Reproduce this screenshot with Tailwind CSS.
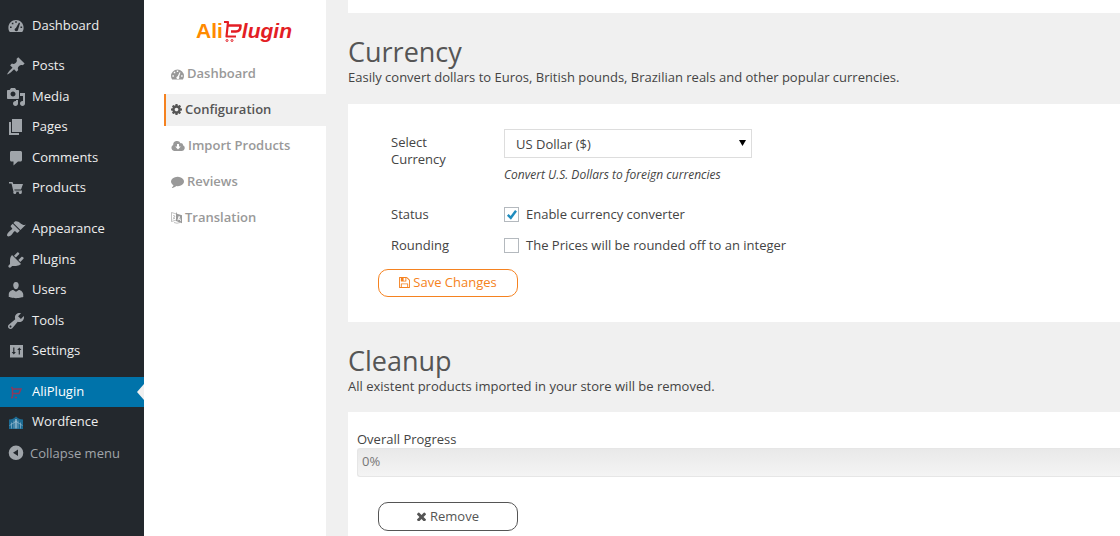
<!DOCTYPE html>
<html lang="en">
  <head>
    <meta charset="UTF-8" />
    <meta name="viewport" content="width=device-width, initial-scale=1.0" />
    <title>AliPlugin Configuration</title>
    <script src="https://cdn.jsdelivr.net/npm/@tailwindcss/browser@4"></script>
  </head>

  <body
    class="flex h-screen overflow-hidden bg-[#f0f0f0] font-['Open_Sans',sans-serif] text-[13px] leading-[18px] text-[#444]"
  >
    <!-- WordPress admin menu -->
    <nav class="w-36 shrink-0 bg-[#23282d] pt-[10px] text-[#eee] [&_a>svg]:mt-0.5">
      <a href="#" class="flex h-[30px] items-center gap-[6px] pl-[6px]">
        <svg class="size-5 text-[#a0a5aa]" viewBox="0 0 20 20" fill="currentColor">
          <path fill-rule="evenodd" d="M3.800 16h12.400c1.100-1.300 1.400-2.700 1.400-4.300 0-4.400-3.400-7.700-7.600-7.700s-7.600 3.300-7.600 7.700c0 1.600.3 3 1.400 4.300zM9.200 5.200h1.600v1.600H9.200zM5.800 6.700h1.600v1.600H5.800zM4 10.500h1.600v1.600H4zM14.500 10.500h1.600v1.600h-1.600zM13 6.500l1 .7-1.800 6.100c0 1.300-.8 2-1.900 2s-2-1-1.600-2.200c.2-.6.600-1 1.200-1.200z" />
        </svg>
        <span>Dashboard</span>
      </a>

      <ul class="mt-[10px] flex h-[152px] flex-col justify-between">
        <li>
          <a href="#" class="flex h-[30px] items-center gap-[6px] pl-[6px]">
            <svg class="size-5 text-[#a0a5aa]" viewBox="0 0 20 20" fill="currentColor">
              <path d="M10.440 3.020l1.820-1.820 6.360 6.350-1.830 1.820c-1.050-.68-2.480-.57-3.410.36l-.75.75c-.92.93-1.040 2.350-.35 3.410l-1.830 1.820-2.410-2.410-2.800 2.790c-.42.42-3.380 2.710-3.800 2.290s1.860-3.390 2.280-3.810l2.790-2.790L4.100 9.360l1.830-1.820c1.050.69 2.480.57 3.400-.36l.75-.75c.93-.92 1.050-2.350.36-3.410z" />
            </svg>
            <span>Posts</span>
          </a>
        </li>
        <li>
          <a href="#" class="flex h-[30px] items-center gap-[6px] pl-[6px]">
            <svg class="size-5 text-[#a0a5aa]" viewBox="0 0 20 20" fill="currentColor">
              <path d="M13 11V4c0-.55-.45-1-1-1h-1.670L9 1H5L3.670 3H2c-.55 0-1 .45-1 1v7c0 .55.45 1 1 1h10c.55 0 1-.45 1-1zM7 4.500c1.380 0 2.500 1.120 2.500 2.500S8.380 9.500 7 9.500 4.500 8.380 4.500 7 5.620 4.500 7 4.500zM14 6h5v10.500c0 1.380-1.120 2.500-2.500 2.500S14 17.880 14 16.500s1.120-2.500 2.500-2.500c.17 0 .34.020.5.050V9h-3V6zm-4 8.050V13h2v3.500c0 1.380-1.120 2.500-2.500 2.500S7 17.880 7 16.500 8.120 14 9.500 14c.17 0 .34.020.5.050z" />
            </svg>
            <span>Media</span>
          </a>
        </li>
        <li>
          <a href="#" class="flex h-[30px] items-center gap-[6px] pl-[6px]">
            <svg class="size-5 text-[#a0a5aa]" viewBox="0 0 20 20" fill="currentColor">
              <path d="M6 15V2h10v13H6zm-1 1h8v2H3V5h2v11z" />
            </svg>
            <span>Pages</span>
          </a>
        </li>
        <li>
          <a href="#" class="flex h-[30px] items-center gap-[6px] pl-[6px]">
            <svg class="size-5 text-[#a0a5aa]" viewBox="0 0 20 20" fill="currentColor">
              <path d="M5.500 3h9c.8 0 1.500.7 1.500 1.500V12c0 .8-.7 1.500-1.500 1.500H12L7.500 17.500v-4h-2C4.700 13.500 4 12.800 4 12V4.500C4 3.700 4.700 3 5.500 3z" />
            </svg>
            <span>Comments</span>
          </a>
        </li>
        <li>
          <a href="#" class="flex h-[30px] items-center gap-[6px] pl-[6px]">
            <svg class="size-5 text-[#a0a5aa]" viewBox="0 0 20 20" fill="currentColor">
              <path d="M3 4h3.500l.8 2H17l-2 5.500H8.300l.3 1H16v1.200H7.500L5.500 5.500H3z" />
              <circle cx="8.800" cy="14.500" r="1.500" />
              <circle cx="14.300" cy="14.500" r="1.500" />
            </svg>
            <span>Products</span>
          </a>
        </li>
      </ul>

      <ul class="mt-[11px] flex h-[152px] flex-col justify-between">
        <li>
          <a href="#" class="flex h-[30px] items-center gap-[6px] pl-[6px]">
            <svg class="size-5 text-[#a0a5aa]" viewBox="0 0 20 20" fill="currentColor">
              <path d="M14.480 11.060L7.410 3.990l1.500-1.500c.5-.56 2.300-.47 3.510.32 1.210.8 1.430 1.280 2.910 2.100 1.180.64 2.450 1.260 4.450.85zm-.71.71L6.700 4.700 4.930 6.470c-.39.39-.39 1.020 0 1.410l1.060 1.060c.39.39.39 1.030 0 1.420-.6.6-1.430 1.110-2.210 1.690-.35.26-.7.53-1.010.84C1.430 14.230.4 16.080 1.400 17.070c.99 1 2.840-.03 4.180-1.360.31-.31.58-.66.85-1.020.57-.78 1.080-1.610 1.690-2.210.39-.39 1.020-.39 1.410 0l1.060 1.060c.39.39 1.020.39 1.410 0z" />
            </svg>
            <span>Appearance</span>
          </a>
        </li>
        <li>
          <a href="#" class="flex h-[30px] items-center gap-[6px] pl-[6px]">
            <svg class="size-5 text-[#a0a5aa]" viewBox="0 0 20 20" fill="currentColor">
              <path d="M13.110 4.360L9.870 7.600 8 5.730l3.240-3.240c.35-.34 1.050-.2 1.560.32.52.51.66 1.210.31 1.550zm-8 1.770l.91-1.120 9.010 9.010-1.190.84c-.71.71-2.630 1.160-3.820 1.160H6.140L4.900 17.260c-.59.59-1.540.59-2.120 0-.59-.58-.59-1.530 0-2.120l1.240-1.240v-3.880c0-1.130.4-3.190 1.090-3.890zm7.260 3.970l3.240-3.240c.34-.35 1.040-.21 1.550.31.52.51.66 1.210.31 1.550l-3.240 3.250z" />
            </svg>
            <span>Plugins</span>
          </a>
        </li>
        <li>
          <a href="#" class="flex h-[30px] items-center gap-[6px] pl-[6px]">
            <svg class="size-5 text-[#a0a5aa]" viewBox="0 0 20 20" fill="currentColor">
              <path d="M10 9.250c-2.270 0-2.730-3.440-2.730-3.440C7 4.020 7.820 2 9.970 2c2.160 0 2.980 2.020 2.710 3.810 0 0-.41 3.440-2.680 3.440zm0 2.570L12.720 10c2.390 0 4.520 2.330 4.520 4.530v2.490s-3.650 1.130-7.240 1.130c-3.650 0-7.240-1.130-7.240-1.130v-2.490c0-2.250 1.940-4.480 4.470-4.480z" />
            </svg>
            <span>Users</span>
          </a>
        </li>
        <li>
          <a href="#" class="flex h-[30px] items-center gap-[6px] pl-[6px]">
            <svg class="size-5 text-[#a0a5aa]" viewBox="0 0 20 20" fill="currentColor">
              <path d="M16.680 9.770c-1.340 1.340-3.300 1.670-4.950.99l-5.410 6.520c-.99.99-2.590.99-3.580 0s-.99-2.590 0-3.570l6.520-5.420c-.68-1.650-.35-3.610.99-4.950 1.280-1.280 3.120-1.620 4.720-1.060l-2.890 2.890 2.820 2.820 2.860-2.870c.53 1.580.18 3.390-1.080 4.650zM3.810 16.210c.4.39 1.040.39 1.430 0 .4-.4.4-1.040 0-1.430-.39-.4-1.030-.4-1.430 0-.39.39-.39 1.030 0 1.430z" />
            </svg>
            <span>Tools</span>
          </a>
        </li>
        <li>
          <a href="#" class="flex h-[30px] items-center gap-[6px] pl-[6px]">
            <svg class="size-5 text-[#a0a5aa]" viewBox="0 0 20 20" fill="currentColor">
              <path fill-rule="evenodd" d="M4 4h13v12.500H4zM7.200 6.500V11H5.700l2.100 2.500L9.900 11H8.400V6.500zM12.700 13.500h1.200V9h1.500l-2.100-2.500L11.200 9h1.500z" />
            </svg>
            <span>Settings</span>
          </a>
        </li>
      </ul>

      <ul class="mt-3">
        <li class="relative">
          <a href="#" class="flex h-[30px] items-center gap-[6px] bg-[#0073aa] pb-0.5 pl-[6px] text-white">
            <svg class="size-5" viewBox="0 0 20 20" fill="none" stroke="#8c3a5c" stroke-width="1.500">
              <path d="M5.500 5l1 1.500v8M6.500 7h8.500l-2 4.500H7M5 15.500h2M9 15.500h2" />
            </svg>
            <span>AliPlugin</span>
          </a>
          <svg class="absolute top-[7px] right-0 h-4 w-[7px]" viewBox="0 0 7 16" fill="#f0f0f0">
            <path d="M7 0v16L0 8z" />
          </svg>
        </li>
        <li>
          <a href="#" class="flex h-[30px] items-center gap-[6px] pb-0.5 pl-[6px]">
            <svg class="size-5" viewBox="0 0 20 20" fill="none">
              <path fill="#1c6b94" d="M3 7.500c3 0 5-1 7-3 2 2 4 3 7 3V17H3z" />
              <path stroke="#8fb6cc" stroke-width=".7" d="M5.500 10.500v6M8 8.500v8M12 8.500v8M14.500 10.500v6M3.500 13.500l6.500-4 6.500 4" />
              <path stroke="#d3e4ed" d="M10 7v9.500" />
            </svg>
            <span>Wordfence</span>
          </a>
        </li>
      </ul>

      <button type="button" class="flex h-8 items-center gap-1 pl-[6px] text-[#a0a5aa]">
        <svg class="size-5" viewBox="0 0 20 20" fill="currentColor">
          <path fill-rule="evenodd" d="M10 2.500a7.300 7.300 0 1 0 0 14.600 7.300 7.300 0 0 0 0-14.600zm2 3.900v6.600L7 9.700z" />
        </svg>
        <span>Collapse menu</span>
      </button>
    </nav>

    <!-- Plugin menu -->
    <aside class="w-[182px] shrink-0 bg-white pl-5 font-semibold text-[#999]">
      <div
        class="flex h-[58px] items-center pt-1 pl-8 font-['Liberation_Sans',sans-serif] text-[21px] leading-[30px] font-bold"
      >
        <span class="text-[#ff8a00]">Ali</span>
        <svg class="h-6 w-[19px]" viewBox="0 0 19 24" fill="none" stroke="#e31e25" stroke-linejoin="round">
          <path stroke-width="2.200" d="M1 3h4L3.500 17.500H13" />
          <path stroke-width="2.600" d="M5 6.500h12.500c0 4-1.500 6-4.500 6H8" />
          <circle cx="4" cy="21.500" r="1" />
          <circle cx="9" cy="21.500" r="1" />
        </svg>
        <span class="text-[#e31e25] italic">lugin</span>
      </div>

      <ul class="flex flex-col gap-1">
        <li>
          <a href="#" class="flex h-8 items-center gap-[3px] border-l-2 border-transparent pb-0.5 pl-[5px]">
            <svg class="mt-0.5 h-[13px] w-[13px]" viewBox="0 0 14 14" fill="currentColor">
              <path fill-rule="evenodd" d="M1.200 12.500h11.600c.8-1.200 1.200-2.400 1.200-3.800a7 7 0 0 0-14 0c0 1.400.4 2.600 1.200 3.800zM6.200 2.700h1.600v1.600H6.200zM3 4h1.600v1.600H3zM1.500 7.700h1.600v1.600H1.500zM10.900 7.700h1.600v1.600h-1.600zM9.200 4.500l1 .3-1.500 4.500c.8 1.300 0 2.500-1.200 2.500-1.900 0-2.400-2.500-.3-3z" />
            </svg>
            Dashboard
          </a>
        </li>
        <li>
          <a
            href="#"
            class="flex h-8 items-center gap-[3px] border-l-2 border-[#f58220] bg-[#f0f0f0] pb-0.5 pl-[5px] text-[#555]"
          >
            <svg class="h-[13px] w-[11px]" viewBox="128 128 1536 1536" fill="currentColor">
              <path d="M1152 896q0-106-75-181t-181-75-181 75-75 181 75 181 181 75 181-75 75-181zm512-109v222q0 12-8 23t-20 13l-185 28q-19 54-39 91 35 50 107 138 10 12 10 25t-9 23q-27 37-99 108t-94 71q-12 0-26-9l-138-108q-44 23-91 38-16 136-29 186-7 28-36 28h-222q-14 0-24.500-8.500t-11.500-21.500l-28-184q-49-16-90-37l-141 107q-10 9-25 9-14 0-25-11-126-114-165-168-7-10-7-23 0-12 8-23 15-21 51-66.500t54-70.500q-27-50-41-99l-183-27q-13-2-21-12.500t-8-23.500v-222q0-12 8-23t19-13l186-28q14-46 39-92-40-57-107-138-10-12-10-24 0-10 9-23 26-36 98.500-107.500t94.500-71.500q13 0 26 10l138 107q44-23 91-38 16-136 29-186 7-28 36-28h222q14 0 24.500 8.500t11.500 21.500l28 184q49 16 90 37l142-107q9-9 24-9 13 0 25 10 129 119 165 170 7 8 7 22 0 12-8 23-15 21-51 66.500t-54 70.500q26 50 41 98l183 28q13 2 21 12.500t8 23.500z" />
            </svg>
            Configuration
          </a>
        </li>
        <li>
          <a href="#" class="flex h-8 items-center gap-[3px] border-l-2 border-transparent pb-0.5 pl-[5px]">
            <svg class="h-[13px] w-[14px]" viewBox="0 0 14 13" fill="currentColor">
              <path fill-rule="evenodd" d="M3 12h8a3 3 0 0 0 1-5.700c.1-1.800-1.200-2.500-2.500-2A3.800 3.800 0 0 0 2.200 6 3.200 3.200 0 0 0 3 12zM6 5h2v2.500h1.800L7 10.500 4.200 7.500H6z" />
            </svg>
            Import Products
          </a>
        </li>
        <li>
          <a href="#" class="flex h-8 items-center gap-[3px] border-l-2 border-transparent pb-0.5 pl-[5px]">
            <svg class="h-[13px] w-[13px]" viewBox="0 0 1792 1792" fill="currentColor">
              <path d="M1792 896q0 174-120 321.500t-326 233-450 85.500q-70 0-145-8-198 175-460 242-49 14-114 22-17 2-30.500-9t-17.500-29v-1q-3-4-.5-12t2-10 4.500-9.500l6-9 7-8.500 8-9q7-8 31-34.500t34.500-38 31-39.500 32.500-51 27-59 26-76q-157-89-247.500-220t-90.500-281q0-130 71-248.500t191-204.500 286-136.500 348-50.500q244 0 450 85.500t326 233 120 321.500z" />
            </svg>
            Reviews
          </a>
        </li>
        <li>
          <a href="#" class="flex h-8 items-center gap-[3px] border-l-2 border-transparent pb-0.5 pl-[5px]">
            <svg class="h-[13px] w-[11px]" viewBox="0 0 11 13" fill="none" stroke="currentColor">
              <path stroke-width=".6" d="M5.500 3L.5 1.500v9l5-1.500M2 4.500l2 .5-2 3.500M2.500 6.500L4 8M3 11.500q3 1.500 6 0" />
              <path fill="currentColor" stroke="none" fill-rule="evenodd" d="M5 .8l1 2 5 1.500v8L5 10zM7.700 5L6.400 9.300l.8.200.3-1 1.400.4.300 1.100.8.200-1.300-4.900zM8.200 6.200l.5 1.800-.9-.3z" />
            </svg>
            Translation
          </a>
        </li>
      </ul>
    </aside>

    <main class="min-w-0 flex-1 pl-[22px]">
      <div class="h-[13px] bg-white"></div>

      <section>
        <h2 class="pt-[22px] text-[27px] leading-[33px] text-[#555]">Currency</h2>
        <p>Easily convert dollars to Euros, British pounds, Brazilian reals and other popular currencies.</p>

        <form class="mt-[18px] bg-white px-[30px] pt-[25px] pb-[25px]">
          <div class="grid grid-cols-[100px_1fr] gap-x-[13px] pl-[13px]">
            <label for="currency" class="w-20 pt-[5px] leading-[17px]">Select Currency</label>
            <div>
              <div class="relative w-[248px]">
                <select
                  id="currency"
                  class="h-[29px] w-full appearance-none border border-[#ddd] bg-white pl-[11px] text-[#444] outline-none"
                >
                  <option>US Dollar ($)</option>
                  <option>Euro (€)</option>
                </select>
                <svg class="pointer-events-none absolute top-[11px] right-[6px] h-[6px] w-[7px]" viewBox="0 0 7 6">
                  <path d="M0 0h7L3.500 6z" />
                </svg>
              </div>
              <p class="mt-2 text-xs leading-[18px] italic">Convert U.S. Dollars to foreign currencies</p>
            </div>

            <span class="mt-[21px]">Status</span>
            <label class="mt-[21px] flex items-center gap-[7px]">
              <span class="relative size-[15px]">
                <input
                  type="checkbox"
                  checked
                  class="peer block size-[15px] appearance-none border border-[#b4b9be] bg-white"
                />
                <svg
                  class="pointer-events-none absolute inset-0 hidden size-[15px] peer-checked:block"
                  viewBox="0 0 15 15"
                  fill="none"
                  stroke="#1e8cbe"
                  stroke-width="2.400"
                >
                  <path d="M3.800 7.800l3 3 5.200-7" />
                </svg>
              </span>
              Enable currency converter
            </label>

            <span class="mt-[13px]">Rounding</span>
            <label class="mt-[13px] flex items-center gap-[7px]">
              <span class="relative size-[15px]">
                <input
                  type="checkbox"
                  class="peer block size-[15px] appearance-none border border-[#b4b9be] bg-white"
                />
                <svg
                  class="pointer-events-none absolute inset-0 hidden size-[15px] peer-checked:block"
                  viewBox="0 0 15 15"
                  fill="none"
                  stroke="#1e8cbe"
                  stroke-width="2.400"
                >
                  <path d="M3.800 7.800l3 3 5.200-7" />
                </svg>
              </span>
              The Prices will be rounded off to an integer
            </label>
          </div>

          <button
            type="button"
            class="mt-[15px] flex h-7 w-[140px] items-center justify-center gap-[3px] rounded-[10px] border border-[#f58220] pb-0.5 text-[#f58220]"
          >
            <svg class="h-[11px] w-[11px]" viewBox="128 128 1536 1536" fill="currentColor">
              <path d="M512 1536h768v-384h-768v384zm896 0h128v-896q0-14-10-38.500t-20-34.500l-281-281q-10-10-34-20t-39-10v416q0 40-28 68t-68 28h-576q-40 0-68-28t-28-68v-416h-128v1280h128v-416q0-40 28-68t68-28h832q40 0 68 28t28 68v416zm-384-928v-320q0-13-9.500-22.500t-22.500-9.500h-192q-13 0-22.500 9.500t-9.500 22.500v320q0 13 9.500 22.500t22.500 9.500h192q13 0 22.500-9.500t9.500-22.500zm640 32v928q0 40-28 68t-68 28h-1344q-40 0-68-28t-28-68v-1344q0-40 28-68t68-28h928q40 0 88 20t76 48l280 280q28 28 48 76t20 88z" />
            </svg>
            Save Changes
          </button>
        </form>
      </section>

      <section>
        <h2 class="pt-[22px] text-[27px] leading-[33px] text-[#555]">Cleanup</h2>
        <p>All existent products imported in your store will be removed.</p>

        <div class="mt-[17px] bg-white pt-[18px] pb-[30px]">
          <div class="pl-[9px]">
            <p id="progressLabel">Overall Progress</p>
            <div
              role="progressbar"
              aria-labelledby="progressLabel"
              aria-valuenow="0"
              class="h-[29px] rounded-l-[3px] border border-r-0 border-[#e6e6e6] bg-linear-to-b from-[#e9e9e9] to-[#f4f4f4] pt-[3px] pl-1 text-[#777]"
            >
              0%
            </div>
          </div>
          <button
            type="button"
            class="mt-[25px] ml-[30px] flex h-[29px] w-[140px] items-center justify-center gap-1 rounded-[10px] border border-[#555] pb-0.5 text-[#555]"
          >
            <svg class="mt-0.5 h-[9px] w-[9px]" viewBox="302 302 1188 1188" fill="currentColor">
              <path d="M1490 1322q0 40-28 68l-136 136q-28 28-68 28t-68-28l-294-294-294 294q-28 28-68 28t-68-28l-136-136q-28-28-28-68t28-68l294-294-294-294q-28-28-28-68t28-68l136-136q28-28 68-28t68 28l294 294 294-294q28-28 68-28t68 28l136 136q28 28 28 68t-28 68l-294 294 294 294q28 28 28 68z" />
            </svg>
            Remove
          </button>
        </div>
      </section>
    </main>
  </body>
</html>
